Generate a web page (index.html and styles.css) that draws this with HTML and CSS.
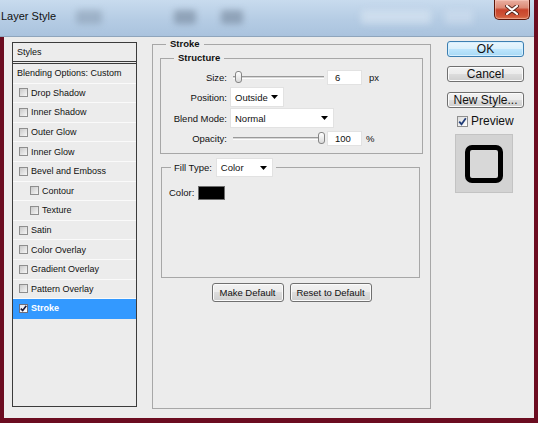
FILE: index.html
```html
<!DOCTYPE html>
<html>
<head>
<meta charset="utf-8">
<link rel="stylesheet" href="styles.css">
</head>
<body>
<div class="window">
  <div class="titlebar">
    <span class="title">Layer Style</span>
    <span class="blur b1"></span>
    <span class="blur b2"></span>
    <span class="blur b3"></span>
    <span class="blur b4"></span>
    <span class="blur b5"></span>
    <span class="close">
      <svg width="14" height="10" viewBox="0 0 14 10"><path d="M2 1L12 9M12 1L2 9" stroke="#5a2a20" stroke-width="4" stroke-linecap="round"/><path d="M2 1L12 9M12 1L2 9" stroke="#fff" stroke-width="2.2" stroke-linecap="round"/></svg>
    </span>
  </div>
  <div class="client">
    <div class="styles-panel">
      <div class="panel-head">Styles</div>
      <ul class="style-list">
        <li class="row plain">Blending Options: Custom</li>
        <li class="row"><span class="cb"></span>Drop Shadow</li>
        <li class="row"><span class="cb"></span>Inner Shadow</li>
        <li class="row"><span class="cb"></span>Outer Glow</li>
        <li class="row"><span class="cb"></span>Inner Glow</li>
        <li class="row"><span class="cb"></span>Bevel and Emboss</li>
        <li class="row sub"><span class="cb"></span>Contour</li>
        <li class="row sub"><span class="cb"></span>Texture</li>
        <li class="row"><span class="cb"></span>Satin</li>
        <li class="row"><span class="cb"></span>Color Overlay</li>
        <li class="row"><span class="cb"></span>Gradient Overlay</li>
        <li class="row"><span class="cb"></span>Pattern Overlay</li>
        <li class="row selected"><span class="cb checked"><svg width="7" height="7" viewBox="0 0 7 7"><path d="M0.8 3.6L2.7 5.6L6.3 0.8" fill="none" stroke="#1a1a3a" stroke-width="1.6"/></svg></span>Stroke</li>
      </ul>
    </div>

    <fieldset class="group stroke-group">
      <legend class="legend-bold">Stroke</legend>
      <fieldset class="group structure">
        <legend class="legend-bold structure-legend">Structure</legend>
        <div class="field-rows">
          <div class="frow r18">
            <span class="flabel">Size:</span>
            <div class="slider">
              <span class="seg" style="width:2px"></span>
              <span class="thumb"></span>
              <span class="seg grow"></span>
            </div>
            <span class="num">6</span>
            <span class="unit px">px</span>
          </div>
          <div class="frow r20">
            <span class="flabel">Position:</span>
            <span class="select w-pos">Outside<svg width="7" height="4" viewBox="0 0 7 4"><path d="M0 0H7L3.5 4Z"/></svg></span>
          </div>
          <div class="frow r20">
            <span class="flabel">Blend Mode:</span>
            <span class="select w-blend">Normal<svg width="7" height="4" viewBox="0 0 7 4"><path d="M0 0H7L3.5 4Z"/></svg></span>
          </div>
          <div class="frow r18">
            <span class="flabel">Opacity:</span>
            <div class="slider">
              <span class="seg" style="width:85px"></span>
              <span class="thumb"></span>
              <span class="seg grow"></span>
            </div>
            <span class="num">100</span>
            <span class="unit pct">%</span>
          </div>
        </div>
      </fieldset>

      <fieldset class="group fill">
        <legend class="fill-legend"><span>Fill Type:</span><span class="select w-fill">Color<svg width="7" height="4" viewBox="0 0 7 4"><path d="M0 0H7L3.5 4Z"/></svg></span></legend>
        <div class="color-row"><span>Color:</span><span class="swatch"></span></div>
      </fieldset>

      <div class="actions">
        <span class="btn w-make">Make Default</span>
        <span class="btn w-reset">Reset to Default</span>
      </div>
    </fieldset>

    <div class="side">
      <span class="btn btn-lg ok">OK</span>
      <span class="btn btn-lg cancel">Cancel</span>
      <span class="btn btn-lg newstyle">New Style...</span>
      <div class="preview-row"><span class="cb7"><svg width="9" height="9" viewBox="0 0 9 9"><path d="M1.2 4.6L3.5 7.2L7.8 1.2" fill="none" stroke="#213d78" stroke-width="1.8"/></svg></span>Preview</div>
      <div class="preview-box"><span class="preview-square"></span></div>
    </div>
  </div>
</div>
</body>
</html>
```

FILE: styles.css
```css
* { box-sizing: border-box; }

body {
  margin: 0;
  background: #6b0c20;
  font-family: "Liberation Sans", Arial, sans-serif;
  color: #111;
}

.window {
  width: 538px;
  height: 423px;
  display: flex;
  flex-direction: column;
}

.titlebar {
  width: 534px;
  height: 37px;
  flex: none;
  display: flex;
  align-items: flex-start;
  background: linear-gradient(#c8dbee, #b5cce4 55%, #aac3de);
  border-bottom: 1px solid #8fa5bc;
  overflow: hidden;
}

.title {
  font-size: 11px;
  line-height: 13px;
  margin: 10px 0 0 1px;
  flex: none;
}

.blur {
  flex: none;
  height: 14px;
  margin-top: 10px;
  filter: blur(3px);
  border-radius: 3px;
}
.b1 { width: 26px; margin-left: 20px; background: rgba(110, 125, 145, 0.35); }
.b2 { width: 22px; margin-left: 72px; background: rgba(95, 110, 130, 0.45); }
.b3 { width: 22px; margin-left: 25px; background: rgba(95, 110, 130, 0.45); }
.b4 { width: 70px; margin-left: 118px; background: rgba(225, 235, 245, 0.5); }
.b5 { width: 28px; margin-left: 14px; background: rgba(225, 235, 245, 0.35); }

.close {
  margin-left: auto;
  margin-right: 4px;
  width: 36px;
  height: 20px;
  flex: none;
  display: flex;
  align-items: center;
  justify-content: center;
  border: 1px solid #5b1609;
  border-top: none;
  border-radius: 0 0 5px 5px;
  background: linear-gradient(#eab0a2, #dc8a76 40%, #c8432b 52%, #cf5638 85%, #de7a55);
  box-shadow: inset 0 0 0 1px rgba(255, 210, 200, 0.45);
}

.client {
  flex: 1;
  margin: 0 4px 5px 4px;
  background: #ececec;
  display: flex;
  align-items: flex-start;
}

/* ---- left styles list ---- */
.styles-panel {
  margin: 5px 0 0 8px;
  width: 125px;
  height: 365px;
  flex: none;
  border: 1px solid #3b3b3b;
  background: #ececec;
  font-size: 9px;
}

.panel-head {
  height: 19px;
  line-height: 18px;
  padding-left: 4px;
  border-bottom: 1px solid #3b3b3b;
}

.style-list {
  margin: 1px 0 0;
  padding: 0;
  list-style: none;
  border-top: 1px solid #3b3b3b;
}

.row {
  height: 19.6px;
  display: flex;
  align-items: center;
  padding-left: 6px;
  border-bottom: 1px solid #fafafa;
  white-space: nowrap;
}
.row.plain { padding-left: 4px; }
.row.sub { padding-left: 17px; }
.row.selected {
  background: #3399ff;
  border-bottom-color: #3399ff;
  color: #fff;
  font-weight: bold;
}

.cb {
  width: 9px;
  height: 9px;
  flex: none;
  margin-right: 3px;
  border: 1px solid #8e8e8e;
  background: linear-gradient(135deg, #c9c9c9, #f6f6f6);
  display: flex;
  align-items: center;
  justify-content: center;
}
.cb.checked {
  background: linear-gradient(135deg, #e4e4ec, #ffffff);
  border-color: #6d6d7a;
}

/* ---- group boxes ---- */
.group {
  margin: 0;
  padding: 0;
  min-width: 0;
  border: 1px solid #a7a7a7;
}

.legend-bold {
  font-size: 9.5px;
  font-weight: bold;
  line-height: 12px;
  padding: 0 4px;
  margin-left: 13px;
}

.stroke-group {
  margin: 1px 0 0 15px;
  width: 279px;
  height: 371px;
  flex: none;
}

.structure {
  margin: 2px 0 0 7px;
  width: 263px;
  height: 102px;
  padding-top: 4px;
  font-size: 9.5px;
}
.structure-legend { margin-left: 13px; }

.field-rows {
  display: flex;
  flex-direction: column;
  gap: 1px;
}

.frow {
  display: flex;
  align-items: center;
}
.r18 { height: 18px; }
.r20 { height: 20px; }

.flabel {
  width: 66px;
  text-align: right;
  flex: none;
}

.slider {
  width: 91px;
  height: 18px;
  margin-left: 6px;
  display: flex;
  align-items: center;
  flex: none;
}
.seg {
  height: 3px;
  border-top: 1px solid #9a9a9a;
  border-bottom: 1px solid #fdfdfd;
  background: #d6d6d6;
  flex: none;
}
.seg.grow { flex: 1; }
.thumb {
  width: 7px;
  height: 12px;
  flex: none;
  border: 1px solid #858585;
  border-radius: 3px;
  background: linear-gradient(#ffffff, #dadada);
}

.num {
  width: 35px;
  height: 15px;
  line-height: 13px;
  margin-left: 3px;
  padding-left: 7px;
  background: #fff;
  border: 1px solid #e2e2e2;
  flex: none;
}
.unit.px { margin-left: 7px; }
.unit.pct { margin-left: 4px; }

.select {
  display: flex;
  align-items: center;
  justify-content: space-between;
  height: 20px;
  padding: 0 5px 0 4px;
  background: #fff;
  border: 1px solid #e2e2e2;
  flex: none;
  font-weight: normal;
}
.w-pos { width: 54px; margin-left: 3px; }
.w-blend { width: 104px; margin-left: 3px; }
.w-fill { width: 57px; margin-left: 4px; height: 19px; }

.fill {
  margin: 4px 0 0 8px;
  width: 259px;
  height: 120px;
  padding-top: 7px;
  font-size: 9.5px;
}
.fill-legend {
  display: flex;
  align-items: center;
  padding: 0 3px;
  margin-left: 9px;
  height: 19px;
}

.color-row {
  display: flex;
  align-items: center;
  height: 17px;
  padding-left: 7px;
}
.swatch {
  width: 27px;
  height: 14px;
  margin-left: 4px;
  background: #000;
  border: 1px solid #6e6e6e;
}

.actions {
  display: flex;
  justify-content: center;
  gap: 6px;
  margin-top: 5px;
}

.btn {
  display: flex;
  align-items: center;
  justify-content: center;
  height: 19px;
  border: 1px solid #707070;
  border-radius: 3px;
  background: linear-gradient(#f2f2f2 0%, #ebebeb 50%, #dddddd 50%, #cfcfcf 100%);
  box-shadow: inset 0 0 0 1px #fbfbfb;
  font-size: 9.5px;
  white-space: nowrap;
  flex: none;
}
.w-make { width: 72px; }
.w-reset { width: 82px; }

/* ---- right column ---- */
.side {
  margin: 4px 0 0 16px;
  width: 77px;
  flex: none;
  display: flex;
  flex-direction: column;
}
.btn-lg {
  height: 16px;
  font-size: 12px;
}
.ok {
  border-color: #3c7fb1;
  background: linear-gradient(#eaf6fd 0%, #d9f0fc 50%, #bee6fd 50%, #a7d9f5 100%);
  box-shadow: inset 0 0 0 1px #d6efff;
}
.cancel { margin-top: 9px; }
.newstyle { margin-top: 10px; }

.preview-row {
  display: flex;
  align-items: center;
  height: 16px;
  margin-top: 5px;
  padding-left: 10px;
  font-size: 12px;
}
.cb7 {
  width: 11px;
  height: 11px;
  margin-right: 3px;
  border: 1px solid #8f8f8f;
  background: linear-gradient(135deg, #dcdcdc, #ffffff);
  display: flex;
  align-items: center;
  justify-content: center;
}

.preview-box {
  margin: 5px 0 0 8px;
  width: 58px;
  height: 59px;
  background: #d3d3d3;
  border: 1px solid #c3c3c3;
  display: flex;
  align-items: center;
  justify-content: center;
}
.preview-square {
  width: 38px;
  height: 38px;
  border: 5px solid #000;
  border-radius: 7px;
  background: #d8d8d8;
}
```
